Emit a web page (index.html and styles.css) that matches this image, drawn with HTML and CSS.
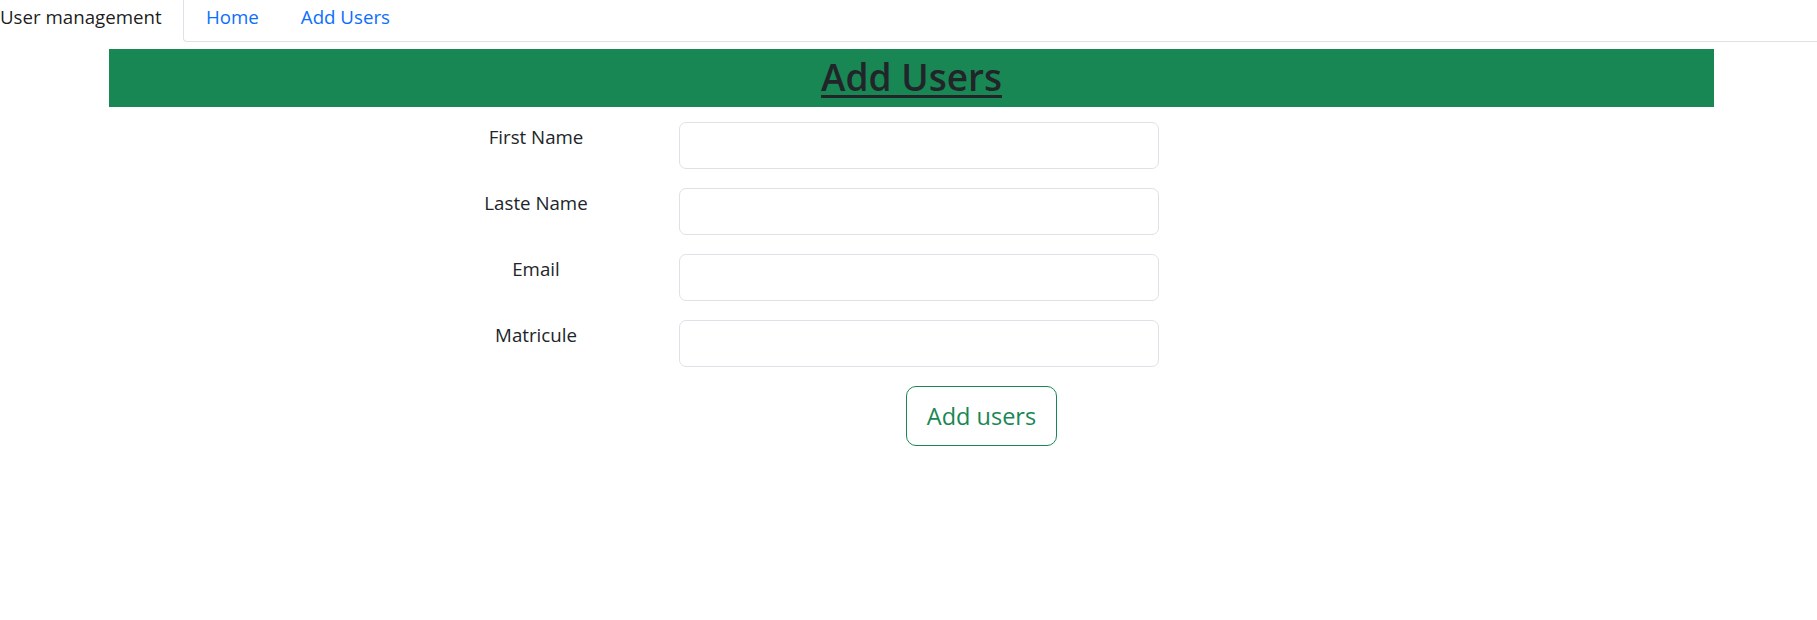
FILE: index.html
```html
<!DOCTYPE html>
<html lang="en">
<head>
<meta charset="utf-8">
<title>Add Users</title>
<link rel="stylesheet" href="styles.css">
</head>
<body>
<nav class="topnav">
  <span class="brand">User management</span>
  <ul class="tabs">
    <li><a class="tab-link" href="#">Home</a></li>
    <li><a class="tab-link" href="#">Add Users</a></li>
  </ul>
</nav>
<main class="page">
  <div class="banner"><h2 class="banner-title">Add Users</h2></div>
  <form class="user-form">
    <div class="form-row">
      <label class="form-label" for="fn">First Name</label>
      <input class="form-input" id="fn" type="text">
    </div>
    <div class="form-row">
      <label class="form-label" for="ln">Laste Name</label>
      <input class="form-input" id="ln" type="text">
    </div>
    <div class="form-row">
      <label class="form-label" for="em">Email</label>
      <input class="form-input" id="em" type="text">
    </div>
    <div class="form-row">
      <label class="form-label" for="mt">Matricule</label>
      <input class="form-input" id="mt" type="text">
    </div>
    <div class="form-actions">
      <button class="btn-outline" type="button">Add users</button>
    </div>
  </form>
</main>
</body>
</html>
```
FILE: styles.css
```css
* { box-sizing: border-box; }
body {
  margin: 0;
  font-family: "Open Sans", "Noto Sans", sans-serif;
  font-size: 18.7px;
  color: #212529;
  background: #fff;
}
.topnav {
  display: flex;
  height: 42px;
}
.brand {
  width: 183px;
  padding-left: 0;
  line-height: 34px;
  color: rgba(0,0,0,0.9);
}
.tabs {
  flex: 1;
  display: flex;
  margin: 0;
  padding: 0 0 0 1px;
  list-style: none;
  border-left: 1px solid #dee2e6;
  border-bottom: 1px solid #dee2e6;
  border-bottom-left-radius: 4px;
}
.tab-link {
  display: block;
  padding: 0 21px;
  line-height: 34px;
  color: #0d6efd;
  text-decoration: none;
}
.page {
  padding: 7px 103px 0 109px;
}
.banner {
  background: #198754;
  height: 58px;
  text-align: center;
}
.banner-title {
  margin: 0;
  font-size: 37px;
  font-weight: 600;
  line-height: 55px;
  color: #212529;
  text-decoration: underline;
  text-decoration-thickness: 3px;
  text-underline-offset: 4px;
}
.user-form {
  padding: 15px 0 0 284px;
  display: flex;
  flex-direction: column;
  gap: 19px;
}
.form-row {
  display: grid;
  grid-template-columns: 286px 480px;
  align-items: start;
}
.form-label {
  text-align: center;
  line-height: 28px;
  padding-top: 1px;
}
.form-input {
  height: 47px;
  border: 1px solid #dee2e6;
  border-radius: 7px;
  font: inherit;
  padding: 0 15px;
}
.form-actions {
  padding-left: 513px;
}
.btn-outline {
  width: 151px;
  height: 60px;
  font-family: inherit;
  font-size: 23.5px;
  color: #198754;
  background: #fff;
  border: 1px solid #198754;
  border-radius: 10px;
  padding: 0;
}
```
